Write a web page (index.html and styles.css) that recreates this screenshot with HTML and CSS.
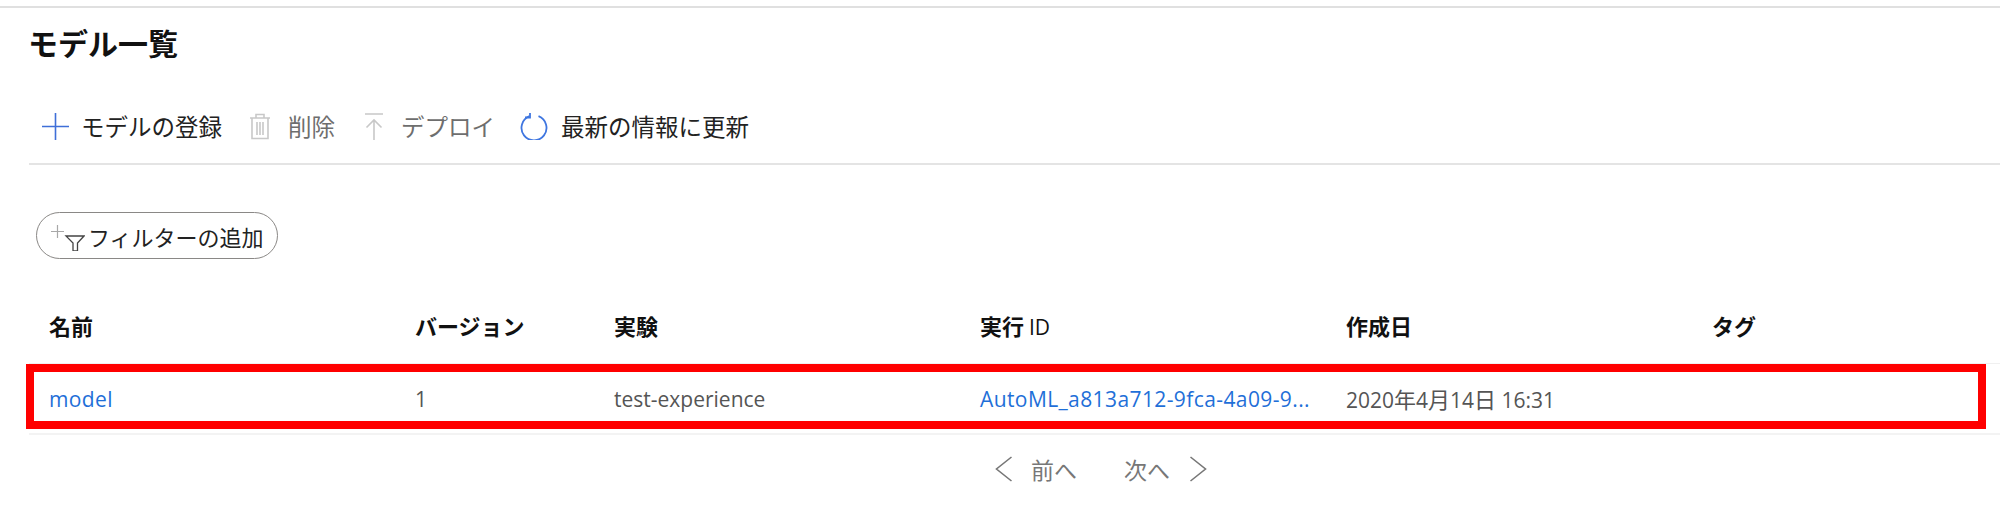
FILE: index.html
```html
<!DOCTYPE html>
<html lang="ja">
<head>
<meta charset="utf-8">
<title>モデル一覧</title>
<link rel="stylesheet" href="styles.css">
</head>
<body>
<div class="page">
  <h1 class="title">モデル一覧</h1>
  <div class="toolbar">
    <button class="tool tool-add">
      <svg class="icon" width="27" height="27" viewBox="0 0 27 27"><path d="M0 13.5H27M13.5 0V27" stroke="#3f6fd8" stroke-width="1.6" fill="none"/></svg>
      <span>モデルの登録</span>
    </button>
    <button class="tool tool-delete disabled">
      <svg class="icon" width="20" height="27" viewBox="0 0 20 27" fill="none" stroke="#c8c8c8" stroke-width="1.6"><path d="M0 5H20M6 5V1.5H14V5M2 5V25.5H18V5M7 9V22M10 9V22M13 9V22"/></svg>
      <span>削除</span>
    </button>
    <button class="tool tool-deploy disabled">
      <svg class="icon" width="18" height="27" viewBox="0 0 18 27" fill="none" stroke="#c8c8c8" stroke-width="1.6"><path d="M0 1H18M9 27V7M1.5 14.5L9 7L16.5 14.5"/></svg>
      <span>デプロイ</span>
    </button>
    <button class="tool tool-refresh">
      <svg class="icon" width="28" height="27" viewBox="0 0 28 27" fill="none" stroke="#3f76e0" stroke-width="1.8"><path d="M9.5 3.2A12.5 12.5 0 1 0 18.5 3.2"/><path d="M10 0V4.5H5"/></svg>
      <span>最新の情報に更新</span>
    </button>
  </div>
  <div class="filters">
    <button class="filter-pill">
      <svg class="filter-icon" width="34" height="26" viewBox="0 0 34 26" fill="none"><path d="M0 6.5H13M6.5 0V13" stroke="#a8a8a8" stroke-width="1.2"/><path d="M15 11H33L26.5 18V26H22V18Z" stroke="#444" stroke-width="1.3"/></svg>
      <span>フィルターの追加</span>
    </button>
  </div>
  <div class="table">
    <div class="tr thead">
      <div class="th">名前</div>
      <div class="th">バージョン</div>
      <div class="th">実験</div>
      <div class="th">実行 <span class="latin">ID</span></div>
      <div class="th">作成日</div>
      <div class="th">タグ</div>
    </div>
    <div class="tr tbody">
      <div class="td"><a class="link">model</a></div>
      <div class="td">1</div>
      <div class="td">test-experience</div>
      <div class="td"><a class="link">AutoML_a813a712-9fca-4a09-9...</a></div>
      <div class="td">2020<span class="cjk">年</span>4<span class="cjk">月</span>14<span class="cjk">日</span> 16:31</div>
      <div class="td"></div>
      <div class="highlight"></div>
    </div>
  </div>
  <div class="pager">
    <svg class="chev" width="18" height="26" viewBox="0 0 18 26" fill="none"><path d="M16.5 1L1.5 13L16.5 25" stroke="#777" stroke-width="1.6"/></svg>
    <span class="pager-prev">前へ</span>
    <span class="pager-next">次へ</span>
    <svg class="chev" width="18" height="26" viewBox="0 0 18 26" fill="none"><path d="M1.5 1L16.5 13L1.5 25" stroke="#777" stroke-width="1.6"/></svg>
  </div>
</div>
</body>
</html>
```
FILE: styles.css
```css
* { box-sizing: border-box; }
html, body { margin: 0; padding: 0; background: #fff; }
body {
  width: 2000px;
  height: 525px;
  overflow: hidden;
  color: #323130;
  font-family: "Open Sans", "Noto Sans CJK JP", sans-serif;
}
.page {
  margin-top: 6px;
  border-top: 2px solid #e0e0e0;
  padding-left: 29px;
}
.title {
  margin: 0 0 0 -1px;
  height: 56px;
  padding-top: 16px;
  font-size: 30px;
  line-height: 40px;
  font-weight: 700;
  color: #111;
}
.toolbar {
  height: 101px;
  border-bottom: 2px solid #e4e4e4;
  display: flex;
  align-items: center;
  padding: 25px 0 0 13px;
}
.tool {
  display: flex;
  align-items: center;
  border: 0;
  background: none;
  padding: 0;
  font: inherit;
  font-family: "Noto Sans CJK JP", sans-serif;
  font-size: 23.5px;
  line-height: 34px;
  color: #222;
}
.tool .icon { display: block; flex: none; }
.tool-add .icon { margin-right: 12px; }
.tool-delete { margin-left: 28px; }
.tool-delete .icon { margin-right: 18px; }
.tool-deploy { margin-left: 30px; }
.tool-deploy .icon { margin-right: 18px; }
.tool-refresh { margin-left: 25px; }
.tool-refresh .icon { margin-right: 13px; }
.disabled { color: #6e6e6e; }
.filters { padding: 47px 0 0 7px; }
.filter-pill {
  width: 242px;
  height: 47px;
  border: 1.5px solid #8a8886;
  border-radius: 24px;
  background: #fff;
  display: flex;
  align-items: center;
  padding: 0 0 0 14px;
  font-family: "Noto Sans CJK JP", sans-serif;
  font-size: 22px;
  line-height: 30px;
  color: #222;
}
.filter-icon { flex: none; margin-right: 3px; margin-top: 4px; }
.table { margin-top: 28px; }
.tr {
  display: grid;
  grid-template-columns: 366px 199px 366px 366px 366px 1fr;
}
.thead { height: 76px; align-items: center; }
.th {
  padding-left: 20px;
  font-family: "Noto Sans CJK JP", sans-serif;
  font-size: 22px;
  font-weight: 700;
  color: #111;
}
.latin { font-family: "Open Sans", sans-serif; font-weight: 400; font-size: 21px; }
.tbody {
  position: relative;
  height: 72px;
  align-items: center;
  border-top: 1px solid #f0f0f0;
  border-bottom: 2px solid #f3f3f3;
}
.td {
  padding-left: 20px;
  font-size: 21px;
  line-height: 30px;
  color: #555;
  white-space: nowrap;
}
.cjk { font-family: "Noto Sans CJK JP", sans-serif; font-size: 22px; }
.link { color: #1f6fd8; }
.td .link { letter-spacing: 0.4px; }
.highlight {
  position: absolute;
  left: -3px;
  top: 0;
  width: 1960px;
  height: 65px;
  border: 8px solid #ff0000;
  pointer-events: none;
}
.pager {
  display: flex;
  align-items: center;
  height: 26px;
  margin-top: 21px;
  padding-left: 966px;
  font-family: "Noto Sans CJK JP", sans-serif;
  font-size: 23px;
  line-height: 26px;
  color: #777;
}
.chev { display: block; flex: none; }
.pager-prev { margin-left: 18px; }
.pager-next { margin-left: 47px; margin-right: 19px; }
```
